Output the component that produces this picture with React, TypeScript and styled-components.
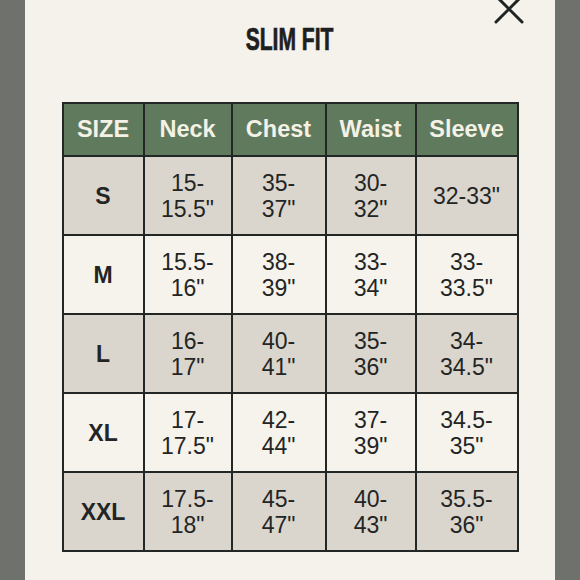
import React from 'react';
import styled, {createGlobalStyle} from "styled-components";

const GlobalStyle = createGlobalStyle`
  html, body {
    margin: 0;
    padding: 0;
    background: #6f716d;
    font-family: "Liberation Sans", Arial, sans-serif;
  }
`

const rows = [
    {size: "S", neck: ["15-", "15.5\""], chest: ["35-", "37\""], waist: ["30-", "32\""], sleeve: ["32-33\""]},
    {size: "M", neck: ["15.5-", "16\""], chest: ["38-", "39\""], waist: ["33-", "34\""], sleeve: ["33-", "33.5\""]},
    {size: "L", neck: ["16-", "17\""], chest: ["40-", "41\""], waist: ["35-", "36\""], sleeve: ["34-", "34.5\""]},
    {size: "XL", neck: ["17-", "17.5\""], chest: ["42-", "44\""], waist: ["37-", "39\""], sleeve: ["34.5-", "35\""]},
    {size: "XXL", neck: ["17.5-", "18\""], chest: ["45-", "47\""], waist: ["40-", "43\""], sleeve: ["35.5-", "36\""]},
];

const widths = [81, 88, 94, 90, 102];
const headers = ["SIZE", "Neck", "Chest", "Waist", "Sleeve"];

const Lines = ({lines}: { lines: string[] }) => (
    <>
        {lines.map((l, i) => <Line key={i}>{l}</Line>)}
    </>
);

export default function App() {
    return (
        <>
            <GlobalStyle/>
            <Panel>
                <Close aria-label="close">
                    <svg width="30" height="30" viewBox="0 0 30 30">
                        <path d="M2 1 L28 27 M28 1 L2 27" stroke="#1f2422" strokeWidth="3" strokeLinecap="round"/>
                    </svg>
                </Close>
                <Title>SLIM FIT</Title>
                <Table>
                    <colgroup>
                        {widths.map((w, i) => <col key={i} style={{width: w}}/>)}
                    </colgroup>
                    <thead>
                    <tr>
                        {headers.map(h => <Head key={h}>{h}</Head>)}
                    </tr>
                    </thead>
                    <tbody>
                    {rows.map((r, i) => (
                        <Row key={r.size} $shade={i % 2 === 0}>
                            <SizeCell>{r.size}</SizeCell>
                            <Cell><Lines lines={r.neck}/></Cell>
                            <Cell><Lines lines={r.chest}/></Cell>
                            <Cell><Lines lines={r.waist}/></Cell>
                            <Cell><Lines lines={r.sleeve}/></Cell>
                        </Row>
                    ))}
                    </tbody>
                </Table>
            </Panel>
        </>
    );
}

const Panel = styled.div`
  position: relative;
  width: 530px;
  height: 580px;
  margin: 0 25px;
  background: #f5f2eb;
  display: flex;
  flex-direction: column;
  align-items: center;
  padding-top: 23px;
  box-sizing: border-box;
  overflow: hidden;
`
const Close = styled.div`
  position: absolute;
  top: -5px;
  right: 31px;
  line-height: 0;
`
const Title = styled.h1`
  margin: 0;
  font-family: "Liberation Sans", Arial, sans-serif;
  font-weight: 700;
  font-size: 31px;
  line-height: 34px;
  color: #1c2020;
  -webkit-text-stroke: 0.7px #1c2020;
  transform: scaleX(0.68);
`
const Table = styled.table`
  margin-top: 45px;
  width: 455px;
  table-layout: fixed;
  border-collapse: collapse;
  border: 2px solid #222624;
  font-family: "Liberation Sans", Arial, sans-serif;
`
const Head = styled.th`
  height: 51px;
  padding: 0;
  background: #607a5d;
  color: #f4f1e6;
  font-size: 23.5px;
  font-weight: 700;
  text-align: center;
  border: 2px solid #222624;
`
const Row = styled.tr<{ $shade: boolean }>`
  background: ${p => p.$shade ? "#dbd6cd" : "#f6f3ec"};
`
const Cell = styled.td`
  height: 77px;
  padding: 0;
  text-align: center;
  vertical-align: middle;
  font-size: 23px;
  line-height: 26px;
  color: #232525;
  border: 2px solid #222624;
`
const SizeCell = styled(Cell)`
  font-weight: 700;
`
const Line = styled.div`
`
